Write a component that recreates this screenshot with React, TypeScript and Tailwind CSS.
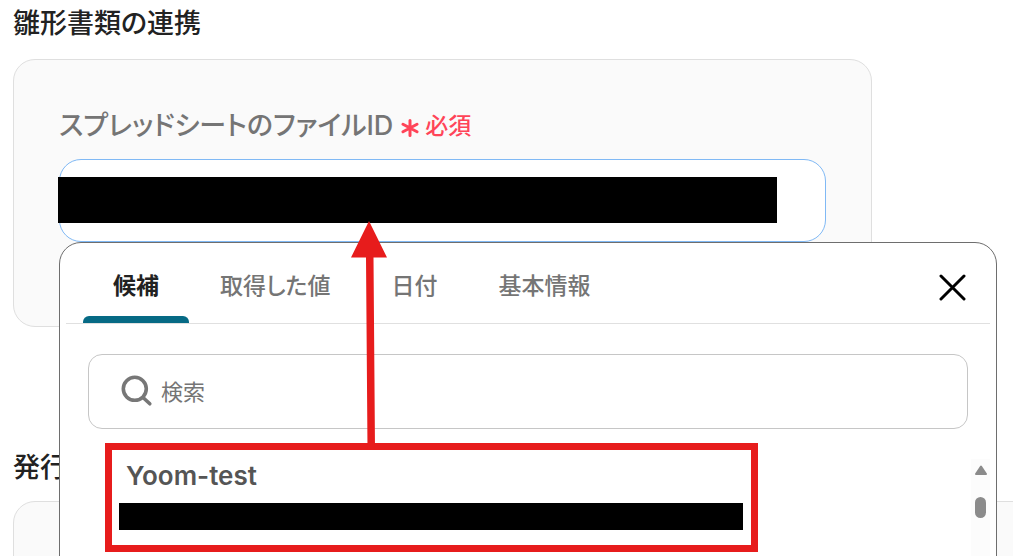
import { useState } from "react";

const TABS = ["候補", "取得した値", "日付", "基本情報"];

function Tabs() {
  const [active, setActive] = useState(0);
  return (
    <div role="tablist" className="flex gap-px">
      {TABS.map((name, i) => (
        <button
          key={name}
          type="button"
          role="tab"
          aria-selected={i === active}
          onClick={() => setActive(i)}
          className={
            "flex h-20 flex-col px-[30px] pt-[27px] text-[23px] leading-8 whitespace-nowrap " +
            (i === active ? "font-semibold text-[#222222]" : "font-medium text-[#757575]")
          }
        >
          <span className="h-[46px]">{name}</span>
          {i === active && <span className="-mx-[30px] h-[7px] self-stretch rounded-t-md bg-[#066a85]" />}
        </button>
      ))}
    </div>
  );
}

function Arrow() {
  return (
    <svg
      className="pointer-events-none absolute bottom-full left-[239px] h-[229px] w-9"
      viewBox="0 0 36 229"
      fill="#e71c1c"
      aria-hidden="true"
    >
      <path d="M18 0 36 36.500H22.500L24 229H16.500L15 36.500H0Z" />
    </svg>
  );
}

function Candidates() {
  return (
    <div className="absolute top-full left-0 -right-[171px] z-10 h-[440px] rounded-t-[22px] border border-[#6e6e6e] bg-white px-1.5">
      <div className="flex items-start justify-between border-b border-[#e0e0e0] pr-[23px] pl-[17px]">
        <Tabs />
        <button type="button" aria-label="閉じる" className="mt-[31px] text-black">
          <svg className="size-7" viewBox="0 0 28 28" fill="none" stroke="currentColor" strokeWidth="3" strokeLinecap="round" aria-hidden="true">
            <path d="M2 2 25 25M25 2 2 25" />
          </svg>
        </button>
      </div>
      <div className="mx-[22px] mt-[30px] flex h-[75px] items-center gap-2 rounded-[14px] border border-[#c6c6c6] px-8">
        <svg className="size-8 shrink-0 overflow-visible" viewBox="0 0 32 32" fill="none" stroke="#777777" strokeWidth="3.600" strokeLinecap="round" aria-hidden="true">
          <circle cx="13.800" cy="12.800" r="11.500" />
          <path d="m22 21.500 6.800 6.300" />
        </svg>
        <input
          type="text"
          aria-label="検索"
          placeholder="検索"
          className="min-w-0 flex-1 text-[22px] leading-8 text-[#222222] outline-none placeholder:text-[#757575]"
        />
      </div>
      <div className="flex items-start justify-between pt-3.5 pl-[39px]">
        <button type="button" className="relative h-[109px] w-[653px] border-[7px] border-[#e71c1c] text-left">
          <Arrow />
          <span className="block px-3.5 text-[26px] leading-[52px] font-semibold text-[#555555]">Yoom-test</span>
          <span className="mt-px mr-2 ml-[7px] block h-[27px] bg-black" />
          <span className="block h-[15px]" />
        </button>
        <div className="mt-4 flex h-56 w-[19px] flex-col items-center bg-[#fcfcfc] pt-1.5" aria-hidden="true">
          <svg className="h-2.5 w-3" viewBox="0 0 12 10" fill="#8b8b8b" stroke="#8b8b8b" strokeWidth="2" strokeLinejoin="round">
            <path d="M6 1.500 11 9H1Z" />
          </svg>
          <span className="mt-[22px] h-[21px] w-[11px] rounded-full bg-[#8b8b8b]" />
        </div>
      </div>
    </div>
  );
}

export default function App() {
  return (
    <main className="h-screen overflow-hidden bg-white pl-[13px] font-['Inter','Noto_Sans_CJK_JP',sans-serif] text-[#222222] [font-feature-settings:'palt']">
      <h2 className="pt-1 text-[27px] leading-10 font-medium">雛形書類の連携</h2>
      <section className="mt-[15px] mr-[141px] h-[268px] rounded-[22px] border border-[#dfdfdf] bg-[#fafafa] px-[45px] pt-[46px]">
        <div className="flex h-10 items-center gap-2 font-medium whitespace-nowrap">
          <label htmlFor="file-id" className="text-[27px] leading-10 text-[#757575]">
            スプレッドシートのファイルID
          </label>
          <span className="flex items-center gap-1.5 text-[23px] leading-10 text-[#ff4458]">
            <svg className="mt-1 size-[18px]" viewBox="0 0 18 18" fill="none" stroke="currentColor" strokeWidth="3" strokeLinecap="round" aria-hidden="true">
              <path d="M9 1.500v15M2 5.200l14 7.600M16 5.200 2 12.800" />
            </svg>
            必須
          </span>
        </div>
        <div className="relative mt-[13px]">
          <input
            id="file-id"
            type="text"
            className="block h-[83px] w-full rounded-[22px] border border-[#80b9f5] bg-white px-6 text-[23px] outline-none"
          />
          <span className="absolute top-[18px] right-[49px] -left-px h-[46px] bg-black" />
          <Candidates />
        </div>
      </section>
      <h2 className="mt-[121px] text-[27px] leading-10 font-medium">発行</h2>
      <section className="-mr-8 mt-[13px] h-40 rounded-[22px] border border-[#dfdfdf] bg-[#fafafa]" />
    </main>
  );
}
